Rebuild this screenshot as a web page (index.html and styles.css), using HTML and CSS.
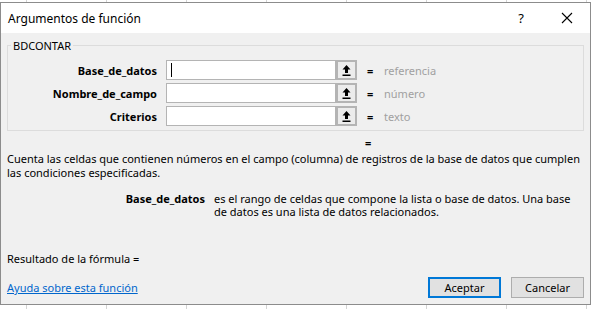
FILE: index.html
```html
<!DOCTYPE html>
<html lang="es">
<head>
    <meta charset="UTF-8">
    <meta name="viewport" content="width=device-width, initial-scale=1.0">
    <title>Argumentos de función</title>
    <link rel="stylesheet" href="styles.css">
</head>
<body>
    <div class="dialog">
        <div class="titlebar">
            <span class="title">Argumentos de función</span>
            <span class="help">?</span>
            <span class="close">
                <svg width="12" height="12" viewBox="0 0 12 12"><path d="M1 1L11 11M11 1L1 11" stroke="#000" stroke-width="1.1" fill="none"/></svg>
            </span>
        </div>

        <div class="content">
            <fieldset class="args">
                <legend>BDCONTAR</legend>
                <div class="row first">
                    <label>Base_de_datos</label>
                    <div class="field"><span class="caret"></span></div>
                    <div class="pick">
                        <svg width="9" height="11" viewBox="0 0 9 11"><path d="M4.5 0L0.5 4.5H3V8H6V4.5H8.5Z" fill="#000"/><rect x="0.5" y="9.5" width="8" height="1.5" fill="#000"/></svg>
                    </div>
                    <span class="eq">=</span>
                    <span class="val">referencia</span>
                </div>
                <div class="row">
                    <label>Nombre_de_campo</label>
                    <div class="field"></div>
                    <div class="pick">
                        <svg width="9" height="11" viewBox="0 0 9 11"><path d="M4.5 0L0.5 4.5H3V8H6V4.5H8.5Z" fill="#000"/><rect x="0.5" y="9.5" width="8" height="1.5" fill="#000"/></svg>
                    </div>
                    <span class="eq">=</span>
                    <span class="val">número</span>
                </div>
                <div class="row">
                    <label>Criterios</label>
                    <div class="field"></div>
                    <div class="pick">
                        <svg width="9" height="11" viewBox="0 0 9 11"><path d="M4.5 0L0.5 4.5H3V8H6V4.5H8.5Z" fill="#000"/><rect x="0.5" y="9.5" width="8" height="1.5" fill="#000"/></svg>
                    </div>
                    <span class="eq">=</span>
                    <span class="val">texto</span>
                </div>
            </fieldset>

            <div class="result-eq">=</div>
            <p class="desc">Cuenta las celdas que contienen números en el campo (columna) de registros de la base de datos que cumplen las condiciones especificadas.</p>

            <div class="arg-help">
                <span class="arg-name">Base_de_datos</span>
                <span class="arg-text">es el rango de celdas que compone la lista o base de datos. Una base de datos es una lista de datos relacionados.</span>
            </div>

            <div class="formula">Resultado de la fórmula =</div>

            <div class="footer">
                <a href="#" class="help-link">Ayuda sobre esta función</a>
                <div class="buttons">
                    <button class="btn default">Aceptar</button>
                    <button class="btn">Cancelar</button>
                </div>
            </div>
        </div>
    </div>
</body>
</html>
```

FILE: styles.css
```css
body {
    margin: 0;
    height: 309px;
    overflow: hidden;
    font-family: "Noto Sans", Arial, sans-serif;
    font-size: 11px;
    color: #000;
    background-color: #fff;
    background-image: repeating-linear-gradient(to right, transparent 0, transparent 26px, #d4d4d4 26px, #d4d4d4 27px, transparent 27px, transparent 80px);
}
.dialog {
    margin-top: 2px;
    width: 589px;
    height: 301px;
    border: 1px solid #8c8c8c;
    background-color: #f0f0f0;
}
.titlebar {
    height: 30px;
    background-color: #fff;
    display: flex;
    align-items: center;
    font-size: 12px;
}
.title {
    padding-left: 7px;
    flex: 1;
}
.help {
    width: 46px;
    text-align: center;
    font-size: 13px;
}
.close {
    width: 46px;
    height: 30px;
    display: flex;
    align-items: center;
    justify-content: center;
}
.content {
    padding: 0 6px 0 6px;
}
.args {
    margin: 6px 0 0 0;
    padding: 0 0 4px 0;
    border: 1px solid #dcdcdc;
}
.args legend {
    margin-left: 3px;
    padding: 0 2px;
    line-height: 13px;
}
.row {
    display: flex;
    align-items: center;
    height: 20px;
    margin-top: 3px;
}
.row.first {
    margin-top: 8px;
}
.row label {
    width: 149px;
    margin-right: 9px;
    text-align: right;
    font-weight: bold;
    flex-shrink: 0;
}
.field {
    width: 168px;
    height: 18px;
    border: 1px solid #b4b4b4;
    background-color: #fff;
    display: flex;
    align-items: center;
    flex-shrink: 0;
}
.caret {
    width: 1px;
    height: 14px;
    margin-left: 4px;
    background-color: #000;
}
.pick {
    width: 17px;
    height: 16px;
    border: 2px solid #b4b4b4;
    background-color: #ececec;
    display: flex;
    align-items: center;
    justify-content: center;
    flex-shrink: 0;
}
.eq {
    margin-left: 10px;
    width: 17px;
    font-weight: bold;
}
.val {
    color: #a0a0a0;
}
.result-eq {
    margin-top: 5px;
    padding-left: 358px;
    line-height: 14px;
    font-weight: bold;
}
.desc {
    margin: 2px 0 0 0;
    line-height: 14px;
}
.arg-help {
    display: flex;
    margin-top: 12px;
    line-height: 13px;
}
.arg-name {
    width: 198px;
    text-align: right;
    font-weight: bold;
    flex-shrink: 0;
}
.arg-text {
    margin-left: 9px;
    width: 360px;
}
.formula {
    margin-top: 34px;
    line-height: 14px;
}
.footer {
    display: flex;
    align-items: center;
    justify-content: space-between;
    margin-top: 11px;
}
.help-link {
    color: #0066cc;
}
.buttons {
    display: flex;
    gap: 10px;
}
.btn {
    width: 73px;
    height: 21px;
    font-family: "Noto Sans", Arial, sans-serif;
    font-size: 11px;
    background-color: #e1e1e1;
    border: 1px solid #adadad;
    padding: 0;
}
.btn.default {
    border: 2px solid #0078d7;
}
```
